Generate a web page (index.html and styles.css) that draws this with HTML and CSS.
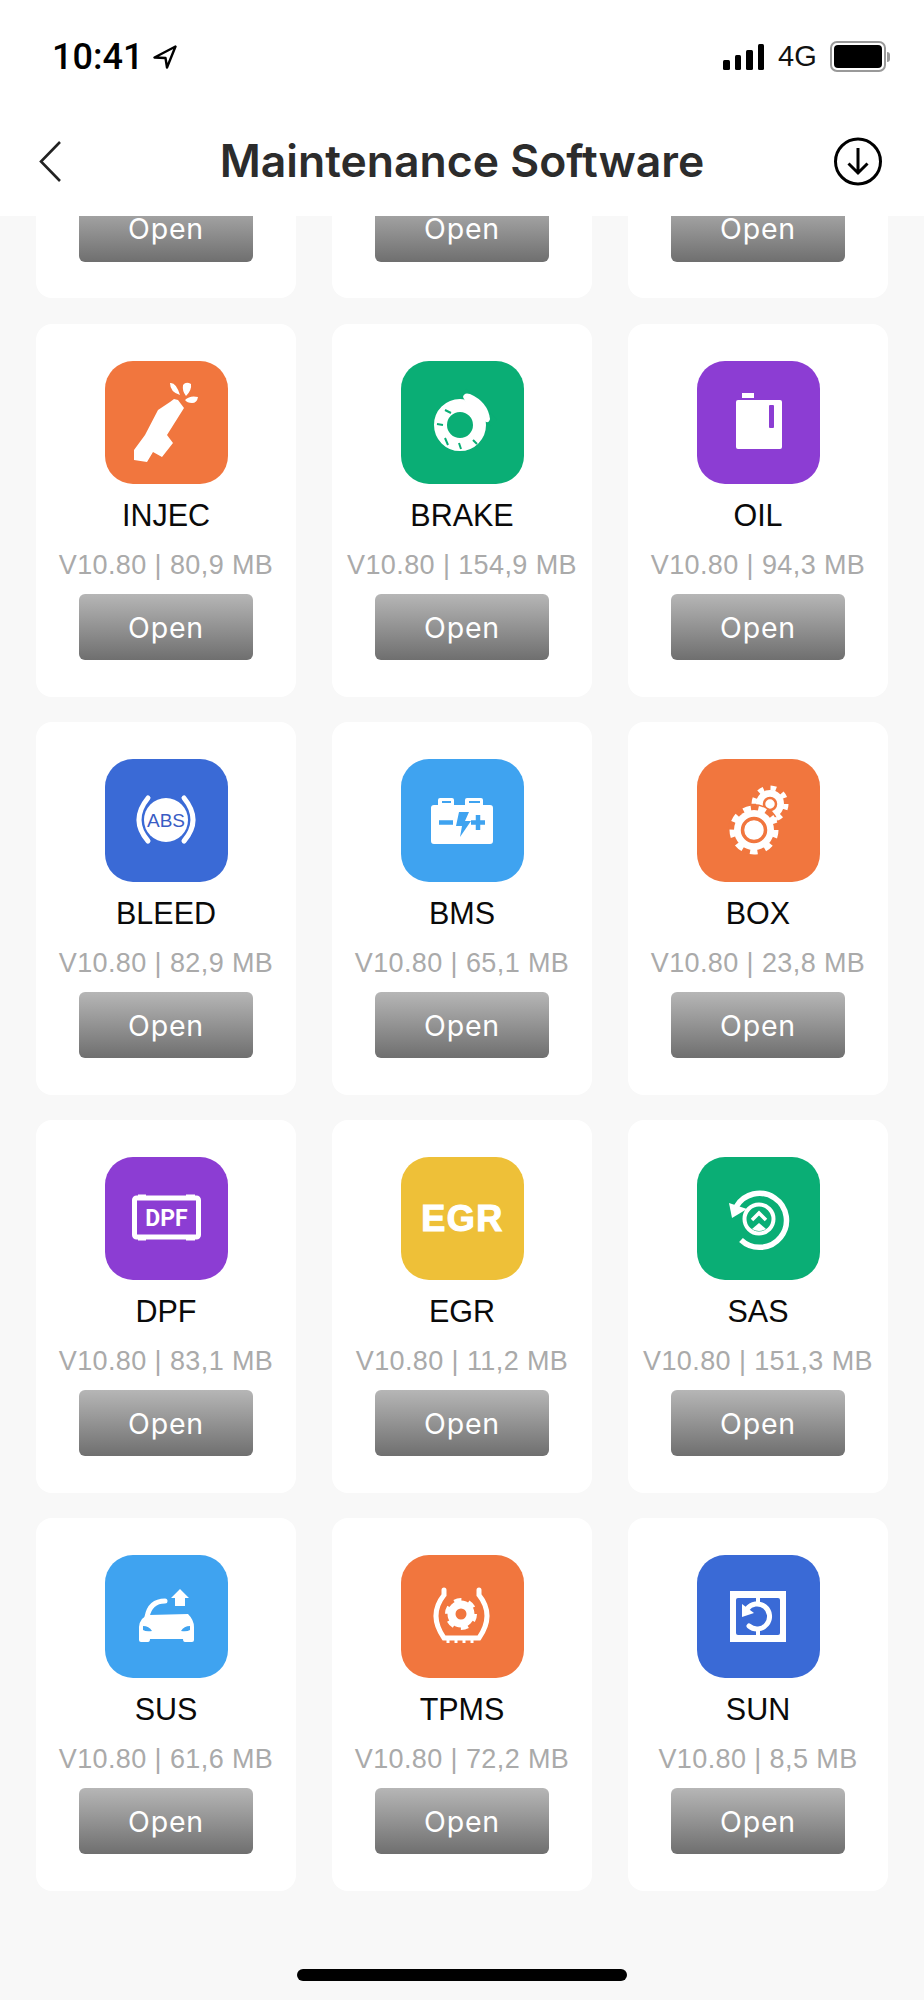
FILE: index.html
```html
<!DOCTYPE html>
<html lang="en">
<head>
    <meta charset="UTF-8">
    <meta name="viewport" content="width=device-width, initial-scale=1.0">
    <title>Maintenance Software</title>
    <link rel="stylesheet" href="styles.css">
</head>
<body>

    <header class="top">
        <div class="status-bar">
            <div class="status-left">
                <span class="time">10:41</span>
                <svg class="location" width="24" height="24" viewBox="0 0 24 24"><path d="M22.5 1.5 1.500 12.500 12.500 13 14 22.500Z" fill="none" stroke="#000" stroke-width="2.400" stroke-linejoin="round"/></svg>
            </div>
            <div class="status-right">
                <div class="signal"><i></i><i></i><i></i><i></i></div>
                <span class="network">4G</span>
                <div class="battery"><div class="battery-level"></div></div>
                <div class="battery-tip"></div>
            </div>
        </div>
        <nav class="nav">
            <svg class="back" width="22" height="41" viewBox="0 0 22 41"><path d="M21 1 2 20.500 21 40" fill="none" stroke="#222" stroke-width="2.600"/></svg>
            <h1>Maintenance Software</h1>
            <svg class="download" width="51" height="49" viewBox="0 0 51 49"><circle cx="24" cy="24.500" r="22.500" fill="none" stroke="#000" stroke-width="3"/><path d="M24 11V36M14.500 26.500 24 36l9.500-9.500" fill="none" stroke="#000" stroke-width="3"/></svg>
        </nav>
    </header>

    <main class="list">
        <!-- row scrolled under the header -->
        <div class="card card-cut"><button class="open">Open</button></div>
        <div class="card card-cut"><button class="open">Open</button></div>
        <div class="card card-cut"><button class="open">Open</button></div>

        <div class="card">
            <svg class="icon orange" viewBox="0 0 123 123">
                <path class="ink" d="M53 49 65 41 69 38 73 39 79 47 62 74 68 82 57 96 48 91 42 101 29 99 29 89 40 74Z"/>
                <path class="ink" d="M65 22Q71 21 75 34 65 31 65 22ZM78 24Q81 20 86 23 87 29 81 35 77 30 78 24ZM80 39Q85 34 93 36 92 42 87 42 82 42 80 39Z"/>
            </svg>
            <div class="name">INJEC</div>
            <div class="meta">V10.80 | 80,9 MB</div>
            <button class="open">Open</button>
        </div>
        <div class="card">
            <svg class="icon green" viewBox="0 0 123 123">
                <circle cx="59" cy="64" r="19.500" fill="none" stroke="#fff" stroke-width="13"/>
                <path d="M62 31 93 62" stroke="#0aae75" stroke-width="9"/>
                <path class="ink" d="M62 36Q63 31 69 33 87 41 89 58 88 63 83 60L65 42Z"/>
                <path class="cut" d="M44 49 50 52M36 63 42 64M44 77 47 84M58 82 60 88M72 79 76 83"/>
            </svg>
            <div class="name">BRAKE</div>
            <div class="meta">V10.80 | 154,9 MB</div>
            <button class="open">Open</button>
        </div>
        <div class="card">
            <svg class="icon purple" viewBox="0 0 123 123">
                <rect class="ink" x="45" y="32" width="12" height="5"/>
                <rect class="ink" x="39" y="39" width="46" height="49" rx="2"/>
                <rect x="72" y="44" width="5" height="23" rx="1" fill="#8c3dd3"/>
            </svg>
            <div class="name">OIL</div>
            <div class="meta">V10.80 | 94,3 MB</div>
            <button class="open">Open</button>
        </div>

        <div class="card">
            <svg class="icon blue" viewBox="0 0 123 123">
                <circle class="ink" cx="61" cy="61" r="22"/>
                <text class="abs" x="61" y="67.500" text-anchor="middle">ABS</text>
                <path class="line" d="M43 39Q25 61 43 82M79 39Q97 61 79 82"/>
            </svg>
            <div class="name">BLEED</div>
            <div class="meta">V10.80 | 82,9 MB</div>
            <button class="open">Open</button>
        </div>
        <div class="card">
            <svg class="icon sky" viewBox="0 0 123 123">
                <path class="ink" d="M37 46V41Q37 39 39 39H51Q53 39 53 41V46H64V41Q64 39 66 39H80Q82 39 82 41V46H89Q92 46 92 49V82Q92 85 89 85H33Q30 85 30 82V49Q30 46 33 46Z"/>
                <path d="M41 43H50M68 43H79" stroke="#3fa3f0" stroke-width="2"/>
                <path d="M38 63.500H52M70 63.500H84M77 56V71" stroke="#3fa3f0" stroke-width="4.500"/>
                <path d="M58 53H68L64 62H70L59 78 61 67H55Z" fill="#3fa3f0"/>
            </svg>
            <div class="name">BMS</div>
            <div class="meta">V10.80 | 65,1 MB</div>
            <button class="open">Open</button>
        </div>
        <div class="card">
            <svg class="icon orange" viewBox="0 0 123 123">
                <circle class="teeth" cx="73" cy="45" r="16" stroke-width="5" stroke-dasharray="5.600 6.970"/>
                <circle class="ink" cx="73" cy="45" r="14"/>
                <circle cx="73" cy="45" r="6" fill="none" stroke="#f1763e" stroke-width="2.500"/>
                <circle cx="57" cy="71" r="26" fill="#f1763e"/>
                <circle class="teeth" cx="57" cy="71" r="21.500" stroke-width="6" stroke-dasharray="7.500 7.510"/>
                <circle class="ink" cx="57" cy="71" r="20"/>
                <circle cx="57" cy="71" r="11.500" fill="#fff" stroke="#f1763e" stroke-width="3.500"/>
                <circle cx="79" cy="60" r="2" fill="#fff"/>
            </svg>
            <div class="name">BOX</div>
            <div class="meta">V10.80 | 23,8 MB</div>
            <button class="open">Open</button>
        </div>

        <div class="card">
            <svg class="icon purple" viewBox="0 0 123 123">
                <rect x="29.500" y="41" width="64" height="39" rx="2" fill="none" stroke="#fff" stroke-width="5"/>
                <path d="M33 39H41M81 39H90M33 82H41M81 82H90" stroke="#fff" stroke-width="3"/>
                <text class="dpf" x="61.500" y="69">DPF</text>
            </svg>
            <div class="name">DPF</div>
            <div class="meta">V10.80 | 83,1 MB</div>
            <button class="open">Open</button>
        </div>
        <div class="card">
            <svg class="icon yellow" viewBox="0 0 123 123">
                <text class="egr" x="61.500" y="74">EGR</text>
            </svg>
            <div class="name">EGR</div>
            <div class="meta">V10.80 | 11,2 MB</div>
            <button class="open">Open</button>
        </div>
        <div class="card">
            <svg class="icon green" viewBox="0 0 123 123">
                <path class="line-thick" d="M44 83A27 27 0 1 0 39 50"/>
                <path class="ink" d="M32 46 50 52 35 61Z"/>
                <circle cx="62" cy="62" r="14.500" fill="none" stroke="#fff" stroke-width="4"/>
                <path d="M55 63 62 56 69 63" fill="none" stroke="#fff" stroke-width="3.500"/>
                <path class="ink" d="M62 66 69 72Q62 76 55 72Z"/>
            </svg>
            <div class="name">SAS</div>
            <div class="meta">V10.80 | 151,3 MB</div>
            <button class="open">Open</button>
        </div>

        <div class="card">
            <svg class="icon sky" viewBox="0 0 123 123">
                <path class="ink" d="M75 34 84 43H80V51H70V43H66Z"/>
                <path class="line" d="M42 62Q45 46 60 46"/>
                <path class="ink" d="M34 72Q35 62 44 60L83 59Q89 65 89 72V85Q89 87 87 87H80Q78 87 78 84H45Q45 87 43 87H36Q34 87 34 85Z"/>
                <path d="M38 71Q44 71 47 76 41 77 38 75ZM85 71Q79 71 76 76 82 77 85 75Z" fill="#3fa3f0"/>
            </svg>
            <div class="name">SUS</div>
            <div class="meta">V10.80 | 61,6 MB</div>
            <button class="open">Open</button>
        </div>
        <div class="card">
            <svg class="icon orange" viewBox="0 0 123 123">
                <path class="line" d="M43 35V40Q27 60 43 83H78Q94 60 78 40V35"/>
                <path d="M47 83V88M55 83V88M63 83V88M71 83V88" stroke="#fff" stroke-width="3"/>
                <circle class="teeth" cx="60" cy="59" r="13" stroke-width="6" stroke-dasharray="6.800 6.810"/>
                <circle cx="60" cy="59" r="9.500" fill="none" stroke="#fff" stroke-width="8"/>
            </svg>
            <div class="name">TPMS</div>
            <div class="meta">V10.80 | 72,2 MB</div>
            <button class="open">Open</button>
        </div>
        <div class="card">
            <svg class="icon blue" viewBox="0 0 123 123">
                <rect class="ink" x="33" y="36" width="56" height="51"/>
                <rect x="39" y="43" width="44" height="37" rx="2" fill="#3a6ad6"/>
                <path d="M61 36V50M61 74V87" stroke="#fff" stroke-width="4"/>
                <path class="line" d="M50 54A12.500 12.500 0 1 1 52 71"/>
                <path class="ink" d="M45 49 57 58 45 62Z"/>
            </svg>
            <div class="name">SUN</div>
            <div class="meta">V10.80 | 8,5 MB</div>
            <button class="open">Open</button>
        </div>
    </main>

    <div class="home-indicator"></div>

</body>
</html>
```

FILE: styles.css
```css
body {
    margin: 0;
    height: 2000px;
    overflow: hidden;
    position: relative;
    background-color: #f8f8f8;
    font-family: "Liberation Sans", Arial, sans-serif;
}

.top {
    background-color: #fff;
    height: 216px;
    box-sizing: border-box;
    padding-top: 43px;
}

.status-bar {
    display: flex;
    justify-content: space-between;
    align-items: center;
    height: 27px;
    padding: 0 34px 0 52px;
}

.status-left,
.status-right {
    display: flex;
    align-items: center;
}

.time {
    font-family: Roboto, sans-serif;
    font-size: 36px;
    font-weight: 500;
    color: #000;
}

.location {
    margin-left: 10px;
}

.signal {
    display: flex;
    align-items: flex-end;
    gap: 5px;
    height: 26px;
}

.signal i {
    display: block;
    width: 6.500px;
    background-color: #000;
    border-radius: 1.500px;
    height: 10px;
}

.signal i:nth-child(2) { height: 15px; }
.signal i:nth-child(3) { height: 20px; }
.signal i:nth-child(4) { height: 26px; }

.network {
    margin-left: 14px;
    font-size: 29px;
    color: #111;
    width: 41px;
}

.battery {
    margin-left: 11px;
    width: 48px;
    height: 23px;
    border: 2px solid #999;
    border-radius: 7px;
    padding: 2px;
}

.battery-level {
    height: 100%;
    background-color: #000;
    border-radius: 4px;
}

.battery-tip {
    width: 3px;
    height: 10px;
    margin-left: 1px;
    background-color: #999;
    border-radius: 0 3px 3px 0;
}

.nav {
    display: grid;
    grid-template-columns: 1fr auto 1fr;
    align-items: center;
    height: 49px;
    margin-top: 67px;
    padding: 0 39px;
}

.download {
    justify-self: end;
}

h1 {
    margin: 0;
    font-family: Inter, sans-serif;
    font-size: 44.500px;
    line-height: 45px;
    font-weight: 600;
    color: #2c2c2c;
}

.list {
    display: grid;
    grid-template-columns: repeat(3, 260px);
    column-gap: 36px;
    row-gap: 25px;
    padding: 0 36px;
}

.card {
    display: flex;
    flex-direction: column;
    align-items: center;
    height: 373px;
    box-sizing: border-box;
    padding-top: 37px;
    background-color: #fff;
    border-radius: 16px;
}

.card-cut {
    height: 82px;
    padding-top: 0;
    border-radius: 0 0 16px 16px;
    margin-bottom: 1px;
}

/* only the lower part of the button is showing below the header */
.card-cut .open {
    height: 46px;
    margin-top: 0;
    padding-bottom: 20px;
    line-height: 26px;
    border-radius: 0 0 6px 6px;
    background: linear-gradient(#a1a1a1, #6f6f6f);
}

.icon {
    display: block;
    width: 123px;
    height: 123px;
    border-radius: 28px;
    flex-shrink: 0;
}

.orange { background-color: #f1763e; }
.green { background-color: #0aae75; }
.purple { background-color: #8c3dd3; }
.blue { background-color: #3a6ad6; }
.sky { background-color: #3fa3f0; }
.yellow { background-color: #eec038; }

.ink { fill: #fff; }

.line {
    fill: none;
    stroke: #fff;
    stroke-width: 5;
    stroke-linecap: round;
}

.line-thick {
    fill: none;
    stroke: #fff;
    stroke-width: 5.500;
}

.cut {
    fill: none;
    stroke: #0aae75;
    stroke-width: 2;
}

.teeth {
    fill: none;
    stroke: #fff;
}

.abs {
    font-family: "Liberation Sans", sans-serif;
    font-size: 19px;
    fill: #3a5cc4;
}

.dpf {
    font-family: Roboto, sans-serif;
    font-weight: 700;
    font-size: 23px;
    fill: #fff;
    text-anchor: middle;
}

.egr {
    font-family: "Liberation Sans", sans-serif;
    font-weight: 700;
    font-size: 36px;
    letter-spacing: 1.500px;
    fill: #fff;
    stroke: #fff;
    stroke-width: 1.200;
    text-anchor: middle;
}

.name {
    margin-top: 13px;
    font-size: 30.500px;
    line-height: 36px;
    color: #0a0a0a;
}

.meta {
    margin-top: 16px;
    font-size: 27px;
    line-height: 32px;
    color: #aaa;
    letter-spacing: 0.4px;
    white-space: nowrap;
}

.open {
    display: block;
    box-sizing: border-box;
    width: 174px;
    height: 66px;
    margin-top: 13px;
    padding: 0;
    border: none;
    border-radius: 6px;
    background: linear-gradient(#b6b6b6, #6f6f6f);
    color: #fff;
    font-family: Inter, sans-serif;
    font-size: 28.500px;
    letter-spacing: 0.8px;
    flex-shrink: 0;
}

.home-indicator {
    position: absolute;
    left: 297px;
    top: 1969px;
    width: 330px;
    height: 12px;
    border-radius: 6px;
    background-color: #000;
}
```
